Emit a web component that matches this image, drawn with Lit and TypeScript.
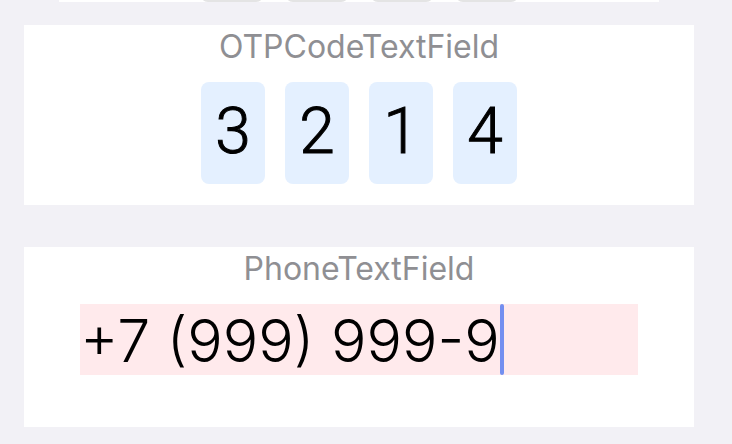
import { LitElement, html, css } from "lit";
import { customElement, property, state } from "lit/decorators.js";

@customElement("field-card")
class FieldCard extends LitElement {
  @property() heading = "";

  static styles = css`
    :host {
      display: block;
      box-sizing: border-box;
      min-height: 180px;
      background: #fff;
    }
    .heading {
      margin: 0;
      padding-bottom: 13px;
      font: 400 32px/44px Inter, sans-serif;
      color: #8f8f93;
      text-align: center;
    }
  `;

  render() {
    return html`
      <h2 class="heading">${this.heading}</h2>
      <slot></slot>
    `;
  }
}

@customElement("otp-code-field")
class OtpCodeField extends LitElement {
  @property() code = "";

  static styles = css`
    .cells {
      display: flex;
      justify-content: center;
      gap: 20px;
    }
    .cell {
      box-sizing: border-box;
      width: 64px;
      height: 102px;
      padding: 0 0 4px;
      border: 0;
      border-radius: 8px;
      outline: none;
      background: #e4f0ff;
      color: #000;
      font: 300 64px/98px Roboto, sans-serif;
      -webkit-text-stroke: 1px #000;
      text-align: center;
    }
  `;

  render() {
    return html`
      <div class="cells" role="group" aria-label="OTPCodeTextField">
        ${[...this.code].map(
          (digit, i) => html`<input
            class="cell"
            inputmode="numeric"
            maxlength="1"
            aria-label="Digit ${i + 1}"
            .value=${digit}
          />`
        )}
      </div>
    `;
  }
}

@customElement("phone-field")
class PhoneField extends LitElement {
  @state() private phone = "+7 (999) 999-9";

  static styles = css`
    .box {
      display: flex;
      height: 71px;
      margin: 0 56px;
      background: #ffeaec;
    }
    .input {
      field-sizing: content;
      min-width: 0;
      padding: 2px 0 0;
      border: 0;
      outline: none;
      background: transparent;
      color: #000;
      caret-color: transparent;
      font: 300 59px/69px Inter, sans-serif;
    }
    .caret {
      flex: none;
      width: 4px;
      border-radius: 2px;
      background: #738ff0;
    }
  `;

  render() {
    return html`
      <div class="box">
        <input
          class="input"
          type="tel"
          aria-label="PhoneTextField"
          .value=${this.phone}
          @input=${(e: Event) => (this.phone = (e.target as HTMLInputElement).value)}
        />
        <span class="caret"></span>
      </div>
    `;
  }
}

@customElement("app-root")
class AppRoot extends LitElement {
  static styles = css`
    :host {
      display: block;
      box-sizing: border-box;
      min-height: 100vh;
      padding: 0 38px 17px 24px;
      background: #f2f1f6;
    }
    .previous {
      display: flex;
      justify-content: center;
      align-items: flex-end;
      gap: 21px;
      height: 2px;
      margin: 0 35px 23px;
      overflow: hidden;
      background: #fff;
    }
    .slot {
      width: 64px;
      height: 24px;
      border-radius: 8px;
      background: #e4e4e4;
    }
    .list {
      display: grid;
      gap: 42px;
    }
  `;

  render() {
    return html`
      <div class="previous">
        ${[0, 1, 2, 3].map(() => html`<span class="slot"></span>`)}
      </div>
      <main class="list">
        <field-card heading="OTPCodeTextField">
          <otp-code-field code="3214"></otp-code-field>
        </field-card>
        <field-card heading="PhoneTextField">
          <phone-field></phone-field>
        </field-card>
      </main>
    `;
  }
}
